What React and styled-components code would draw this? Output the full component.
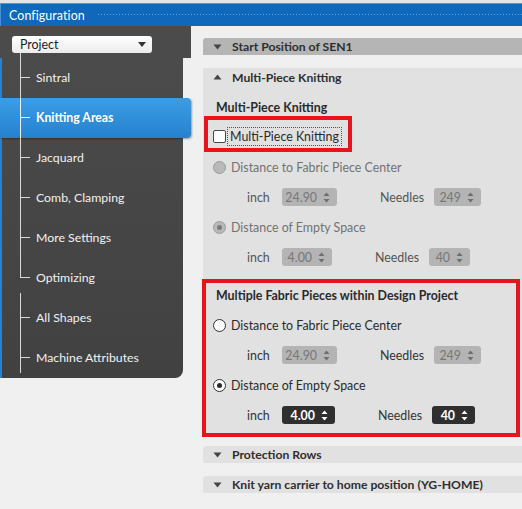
import React from "react";
import styled, { createGlobalStyle, css } from "styled-components";

const GlobalStyle = createGlobalStyle`
  html, body {
    margin: 0;
    padding: 0;
    background: #f0f0f0;
  }
  body {
    font-family: Lato, "Noto Sans", sans-serif;
    font-size: 12.4px;
    color: #2a2a2a;
  }
  * {
    box-sizing: border-box;
  }
`;

const menu = [
  { label: "Sintral", line: "full" },
  { label: "Knitting Areas", line: "full", active: true },
  { label: "Jacquard", line: "full" },
  { label: "Comb, Clamping", line: "full" },
  { label: "More Settings", line: "full" },
  { label: "Optimizing", line: "end" },
  { label: "All Shapes", line: "start" },
  { label: "Machine Attributes", line: "tail" },
];

const SpinArrows = ({ color }) => (
  <svg width="7" height="11" viewBox="0 0 7 11">
    <path d="M3.5 0.5 L6.5 4 L0.5 4 Z" fill={color} />
    <path d="M3.5 10.5 L6.5 7 L0.5 7 Z" fill={color} />
  </svg>
);

const Caret = ({ up }) => (
  <svg width="9" height="6" viewBox="0 0 9 6">
    {up ? (
      <path d="M4.5 0.5 L8.5 5.5 L0.5 5.5 Z" fill="#444" />
    ) : (
      <path d="M0.5 0.5 L8.5 0.5 L4.5 5.5 Z" fill="#444" />
    )}
  </svg>
);

const Spin = ({ value, width, dark }) => (
  <SpinBox $width={width} $dark={dark}>
    <span>{value}</span>
    <SpinArrows color={dark ? "#ffffff" : "#6e6e6e"} />
  </SpinBox>
);

const Radio = ({ checked, disabled, children }) => (
  <RadioRow>
    <RadioDot $checked={checked} $disabled={disabled} />
    <OptionText $disabled={disabled}>{children}</OptionText>
  </RadioRow>
);

const SpinRow = ({ inch, inchWidth, needles, needlesWidth, dark, muted }) => (
  <FieldRow>
    <FieldLabel $muted={muted} $width={35}>inch</FieldLabel>
    <Spin value={inch} width={inchWidth} dark={dark} />
    <FieldLabel $muted={muted} $width={54} $gap={43}>Needles</FieldLabel>
    <Spin value={needles} width={needlesWidth} dark={dark} />
  </FieldRow>
);

const App = () => {
  return (
    <>
      <GlobalStyle />
      <Window>
        <TopStrip />
        <TitleBar>
          <Title>Configuration</Title>
          <Grip />
        </TitleBar>
        <Body>
          <Sidebar>
            <SidebarTop>
              <Dropdown>
                <span>Project</span>
                <DropArrow />
              </Dropdown>
            </SidebarTop>
            <SidebarBody>
              {menu.map((item) => (
                <MenuItem key={item.label} $active={item.active} $line={item.line}>
                  {item.label}
                </MenuItem>
              ))}
            </SidebarBody>
          </Sidebar>

          <Main>
            <SectionHeader $dark>
              <Caret />
              <span>Start Position of SEN1</span>
            </SectionHeader>

            <Section>
              <SectionHeader>
                <Caret up />
                <span>Multi-Piece Knitting</span>
              </SectionHeader>
              <SubHeading>Multi-Piece Knitting</SubHeading>
              <Highlight $inline>
                <CheckRow>
                  <CheckBox />
                  <FocusLabel>Multi-Piece Knitting</FocusLabel>
                </CheckRow>
              </Highlight>
              <Radio disabled>Distance to Fabric Piece Center</Radio>
              <SpinRow inch="24.90" inchWidth={55} needles="249" needlesWidth={47} muted />
              <Radio disabled checked>Distance of Empty Space</Radio>
              <SpinRow inch="4.00" inchWidth={50} needles="40" needlesWidth={41} muted />

              <Highlight>
                <BoxHeading>Multiple Fabric Pieces within Design Project</BoxHeading>
                <Radio>Distance to Fabric Piece Center</Radio>
                <SpinRow inch="24.90" inchWidth={55} needles="249" needlesWidth={47} />
                <Radio checked>Distance of Empty Space</Radio>
                <SpinRow inch="4.00" inchWidth={53} needles="40" needlesWidth={43} dark />
              </Highlight>
            </Section>

            <SectionHeader>
              <Caret />
              <span>Protection Rows</span>
            </SectionHeader>
            <SectionHeader>
              <Caret />
              <span>Knit yarn carrier to home position (YG-HOME)</span>
            </SectionHeader>
          </Main>
        </Body>
      </Window>
    </>
  );
};

const Window = styled.div`
  width: 522px;
  height: 509px;
  overflow: hidden;
  background: #f0f0f0;
`;

const TopStrip = styled.div`
  height: 4px;
  background: #e4e4e4;
  border-bottom: 1px solid #8a8a8a;
`;

const TitleBar = styled.div`
  height: 22px;
  background: #1068bb;
  display: flex;
  align-items: center;
  padding-left: 8px;
  border-left: 1px solid #4a8fd4;
`;

const Title = styled.div`
  color: #ffffff;
  font-size: 12.4px;
  letter-spacing: 0.1px;
`;

const Grip = styled.div`
  flex: 1;
  height: 4px;
  margin-left: 12px;
  background-image: radial-gradient(circle, #5fa3e6 0.8px, transparent 1px);
  background-size: 3px 3px;
`;

const Body = styled.div`
  display: flex;
  align-items: flex-start;
`;

const Sidebar = styled.div`
  width: 191px;
  flex-shrink: 0;
  display: flex;
  flex-direction: column;
`;

const SidebarTop = styled.div`
  height: 32px;
  background: #4b4b4b;
  padding: 10px 0 0 12px;
  position: relative;

  &::after {
    content: "";
    position: absolute;
    left: 20px;
    top: 27px;
    height: 5px;
    width: 1px;
    background: #d8d8d8;
  }
`;

const Dropdown = styled.div`
  width: 140px;
  height: 17px;
  border-radius: 3px;
  background: linear-gradient(#ffffff, #ececec);
  display: flex;
  align-items: center;
  justify-content: space-between;
  padding: 0 6px 0 8px;
  font-size: 12.4px;
  color: #222;
`;

const DropArrow = styled.span`
  width: 0;
  height: 0;
  border-left: 4px solid transparent;
  border-right: 4px solid transparent;
  border-top: 5px solid #333;
`;

const SidebarBody = styled.div`
  width: 183px;
  height: 320px;
  background: linear-gradient(#4b4b4b, #414141);
  border-left: 2px solid #2a7fd2;
  border-bottom-right-radius: 8px;
`;

const lineSpan = {
  full: "top: 0; bottom: 0;",
  end: "top: 0; height: 20px;",
  start: "top: -5px; bottom: 0;",
  tail: "top: 0; height: 35px;",
};

const MenuItem = styled.div`
  position: relative;
  height: 40px;
  display: flex;
  align-items: center;
  padding-left: 34px;
  padding-bottom: 2px;
  color: #f2f2f2;
  font-size: 12.3px;

  &::before {
    content: "";
    position: absolute;
    left: 18px;
    width: 1px;
    background: #d8d8d8;
    ${({ $line }) => lineSpan[$line]}
  }

  &::after {
    content: "";
    position: absolute;
    left: 18px;
    top: 19px;
    width: 10px;
    height: 1px;
    background: #d8d8d8;
  }

  ${({ $active }) =>
    $active &&
    css`
      width: 191px;
      margin-left: -2px;
      padding-left: 36px;
      font-weight: 700;
      color: #ffffff;
      background: linear-gradient(#3c9de4, #2581d0);
      border-radius: 0 4px 4px 0;
      box-shadow: 1px 1px 2px rgba(0, 0, 0, 0.35);

      &::before,
      &::after {
        left: 20px;
        background: #e8f2fb;
      }
    `}
`;

const Main = styled.div`
  flex: 1;
  padding-top: 12px;
  padding-left: 12px;
  display: flex;
  flex-direction: column;
  gap: 13px;

  & > * {
    flex-shrink: 0;
  }
`;

const SectionHeader = styled.div`
  height: 17px;
  display: flex;
  align-items: center;
  gap: 10px;
  padding-left: 10px;
  font-weight: 700;
  font-size: 12.2px;
  color: #2e2e2e;
  background: ${({ $dark }) => ($dark ? "#b5b5b5" : "#e1e1e1")};
  border-radius: 3px 0 0 0;
`;

const Section = styled.div`
  background: #e1e1e1;
  border-radius: 3px 0 0 0;
  display: flex;
  flex-direction: column;
  margin-bottom: -4px;

  & > * {
    flex-shrink: 0;
  }

  & > ${SectionHeader} {
    height: 18px;
  }
`;

const SubHeading = styled.div`
  height: 16px;
  margin-top: 13px;
  padding-left: 13px;
  font-weight: 700;
  display: flex;
  align-items: center;
`;

const Highlight = styled.div`
  border: 4px solid #e8141c;
  margin-left: ${({ $inline }) => ($inline ? "1px" : "-1px")};
  margin-right: 2px;
  margin-top: ${({ $inline }) => ($inline ? "1px" : "7px")};
  padding: ${({ $inline }) => ($inline ? "7px 0 2px 5px" : "0 0 3px 0")};
  width: ${({ $inline }) => ($inline ? "148px" : "auto")};
`;

const CheckRow = styled.div`
  display: flex;
  align-items: center;
  gap: 1px;
`;

const CheckBox = styled.span`
  width: 13px;
  height: 13px;
  background: #ffffff;
  border: 1px solid #4a4a4a;
  border-radius: 2px;
`;

const FocusLabel = styled.span`
  border: 1px dotted #555;
  height: 19px;
  display: flex;
  align-items: center;
  padding: 0 2px 0 2px;
  color: #2a2a2a;
`;

const BoxHeading = styled.div`
  height: 24px;
  margin-bottom: 3px;
  display: flex;
  align-items: center;
  padding-left: 10px;
  font-weight: 700;
`;

const RadioRow = styled.div`
  height: 30px;
  display: flex;
  align-items: center;
  gap: 5px;
  padding-left: 10px;

  ${Highlight} & {
    padding-left: 7px;
  }
`;

const RadioDot = styled.span`
  width: 13px;
  height: 13px;
  border-radius: 50%;
  border: 1px solid ${({ $disabled }) => ($disabled ? "#9a9a9a" : "#333")};
  background: ${({ $disabled }) => ($disabled ? "#b9b9b9" : "#ffffff")};
  display: flex;
  align-items: center;
  justify-content: center;

  &::after {
    content: "";
    display: ${({ $checked }) => ($checked ? "block" : "none")};
    width: 5px;
    height: 5px;
    border-radius: 50%;
    background: ${({ $disabled }) => ($disabled ? "#7a7a7a" : "#2a2a2a")};
  }
`;

const OptionText = styled.span`
  color: ${({ $disabled }) => ($disabled ? "#727272" : "#2a2a2a")};
`;

const FieldRow = styled.div`
  height: 30px;
  display: flex;
  align-items: center;
  padding-left: 44px;

  ${Highlight} & {
    padding-left: 41px;
  }
`;

const FieldLabel = styled.span`
  width: ${({ $width }) => $width}px;
  margin-left: ${({ $gap }) => $gap || 0}px;
  color: ${({ $muted }) => ($muted ? "#555" : "#333")};
`;

const SpinBox = styled.div`
  width: ${({ $width }) => $width}px;
  height: 18px;
  border-radius: 3px;
  display: flex;
  align-items: center;
  justify-content: flex-end;
  gap: 6px;
  padding-right: 7px;
  background: ${({ $dark }) => ($dark ? "#2f2f2f" : "#b4b4b4")};
  color: ${({ $dark }) => ($dark ? "#ffffff" : "#777777")};
  font-weight: ${({ $dark }) => ($dark ? 700 : 400)};
`;

export default App;
